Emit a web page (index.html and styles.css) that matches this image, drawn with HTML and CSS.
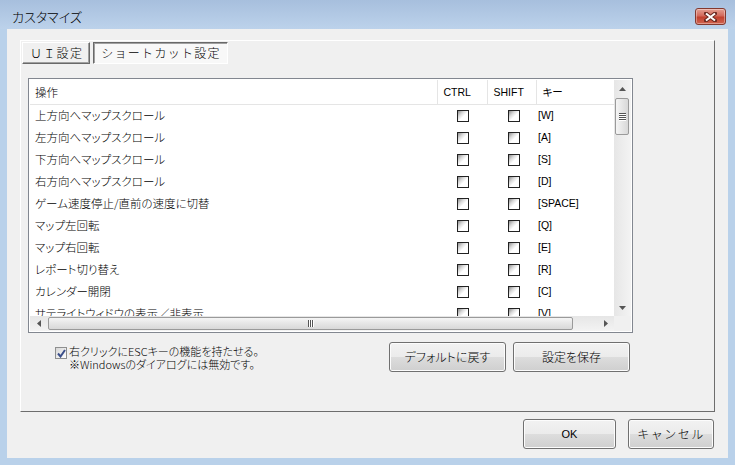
FILE: index.html
```html
<!DOCTYPE html>
<html lang="ja">
<head>
    <meta charset="utf-8">
    <title>カスタマイズ</title>
    <link rel="stylesheet" href="styles.css">
</head>
<body>

<div class="window">
    <div class="titlebar">
        <span class="title">カスタマイズ</span>
        <button class="close">
            <svg width="13" height="10" viewBox="0 0 13 10">
                <path d="M2 1.5 L11 8.5 M11 1.5 L2 8.5" stroke="#6b2a22" stroke-width="4" stroke-linecap="square"/>
                <path d="M2 1.5 L11 8.5 M11 1.5 L2 8.5" stroke="#fff" stroke-width="2"/>
            </svg>
        </button>
    </div>

    <div class="client">
        <div class="panel">
            <div class="tabs">
                <button class="tab">ＵＩ設定</button>
                <button class="tab valgt">ショートカット設定</button>
            </div>

            <div class="listbox">
                <div class="viewport">
                    <table class="keys">
                        <thead>
                            <tr><th class="c-name">操作</th><th>CTRL</th><th>SHIFT</th><th>キー</th></tr>
                        </thead>
                        <tbody>
                            <tr><td class="c-name">上方向へマップスクロール</td><td class="c-ctrl"><span class="box"></span></td><td class="c-shift"><span class="box"></span></td><td class="c-key">[W]</td></tr>
                            <tr><td class="c-name">左方向へマップスクロール</td><td class="c-ctrl"><span class="box"></span></td><td class="c-shift"><span class="box"></span></td><td class="c-key">[A]</td></tr>
                            <tr><td class="c-name">下方向へマップスクロール</td><td class="c-ctrl"><span class="box"></span></td><td class="c-shift"><span class="box"></span></td><td class="c-key">[S]</td></tr>
                            <tr><td class="c-name">右方向へマップスクロール</td><td class="c-ctrl"><span class="box"></span></td><td class="c-shift"><span class="box"></span></td><td class="c-key">[D]</td></tr>
                            <tr><td class="c-name">ゲーム速度停止/直前の速度に切替</td><td class="c-ctrl"><span class="box"></span></td><td class="c-shift"><span class="box"></span></td><td class="c-key">[SPACE]</td></tr>
                            <tr><td class="c-name">マップ左回転</td><td class="c-ctrl"><span class="box"></span></td><td class="c-shift"><span class="box"></span></td><td class="c-key">[Q]</td></tr>
                            <tr><td class="c-name">マップ右回転</td><td class="c-ctrl"><span class="box"></span></td><td class="c-shift"><span class="box"></span></td><td class="c-key">[E]</td></tr>
                            <tr><td class="c-name">レポート切り替え</td><td class="c-ctrl"><span class="box"></span></td><td class="c-shift"><span class="box"></span></td><td class="c-key">[R]</td></tr>
                            <tr><td class="c-name">カレンダー開閉</td><td class="c-ctrl"><span class="box"></span></td><td class="c-shift"><span class="box"></span></td><td class="c-key">[C]</td></tr>
                            <tr><td class="c-name">サテライトウィドウの表示／非表示</td><td class="c-ctrl"><span class="box"></span></td><td class="c-shift"><span class="box"></span></td><td class="c-key">[V]</td></tr>
                        </tbody>
                    </table>
                </div>

                <div class="vscroll">
                    <div class="sbtn"><svg width="7" height="4" viewBox="0 0 7 4"><path d="M0 4 L3.5 0 L7 4 Z" fill="#555"/></svg></div>
                    <div class="vtrack"><div class="vthumb"><span></span><span></span><span></span><span></span></div></div>
                    <div class="sbtn"><svg width="7" height="4" viewBox="0 0 7 4"><path d="M0 0 L3.5 4 L7 0 Z" fill="#555"/></svg></div>
                </div>

                <div class="hscroll">
                    <div class="sbtn"><svg width="4" height="7" viewBox="0 0 4 7"><path d="M4 0 L0 3.5 L4 7 Z" fill="#555"/></svg></div>
                    <div class="htrack"><div class="hthumb"><span></span><span></span><span></span></div></div>
                    <div class="sbtn"><svg width="4" height="7" viewBox="0 0 4 7"><path d="M0 0 L4 3.5 L0 7 Z" fill="#555"/></svg></div>
                </div>
                <div class="corner"></div>
            </div>

            <div class="options">
                <label class="esc-option">
                    <span class="check">
                        <svg width="9" height="9" viewBox="0 0 9 9"><path d="M1 4.5 L3.5 7.5 L8 1" fill="none" stroke="#3b4f8a" stroke-width="2"/></svg>
                    </span>
                    <span class="esc-text">右クリックにESCキーの機能を持たせる。<br>※Windowsのダイアログには無効です。</span>
                </label>
                <div class="actions">
                    <button class="btn">デフォルトに戻す</button>
                    <button class="btn">設定を保存</button>
                </div>
            </div>
        </div>

        <div class="footer">
            <button class="btn ok">OK</button>
            <button class="btn cancel">キャンセル</button>
        </div>
    </div>
</div>

</body>
</html>
```

FILE: styles.css
```css
* {
    box-sizing: border-box;
}

body {
    margin: 0;
    font-family: "Noto Sans CJK JP", sans-serif;
    font-size: 12px;
    font-weight: 300;
    font-feature-settings: "palt";
    color: #000;
}

button {
    font: inherit;
    color: inherit;
    margin: 0;
}

.window {
    width: 735px;
    height: 465px;
    display: flex;
    flex-direction: column;
    padding: 0 7px 7px;
    background: #b9d1ea;
}

.titlebar {
    height: 29px;
    margin: 0 -7px;
    padding: 0 9px 0 12px;
    display: flex;
    align-items: center;
    justify-content: space-between;
    background: linear-gradient(#a7bfdd, #bcd2eb);
}

.title {
    font-size: 13px;
    line-height: 16px;
    margin-top: 5px;
}

.close {
    width: 31px;
    height: 17px;
    margin-top: 4px;
    padding: 0;
    display: flex;
    align-items: center;
    justify-content: center;
    border: 1px solid #83392f;
    border-radius: 3px;
    background: linear-gradient(#e4a093, #d2695b 45%, #c1412f 55%, #d06450);
    box-shadow: inset 0 0 0 1px rgba(255, 255, 255, 0.35);
}

.client {
    flex: 1;
    display: flex;
    flex-direction: column;
    padding: 11px 13px 0;
    background: #f0f0f0;
}

.panel {
    flex: 1;
    padding: 1px 0 0 1px;
    border: 1px solid;
    border-color: #fff #6d6d6d #6d6d6d #fff;
}

.tabs {
    display: flex;
    gap: 3px;
    height: 22px;
}

.tab {
    height: 22px;
    padding: 0 6px 0 7px;
    font-size: 12px;
    letter-spacing: 1.3px;
    line-height: 18px;
    font-feature-settings: normal;
    background: #f0f0f0;
    border: 1px solid;
    border-color: #fff #696969 #696969 #fff;
    box-shadow: inset -1px -1px 0 #a0a0a0;
}

.tab.valgt {
    border-color: #696969 #fff #fff #696969;
    box-shadow: inset 1px 1px 0 #a0a0a0;
    background: #f8f8f8;
}

.listbox {
    width: 605px;
    height: 255px;
    margin: 14px 0 0 6px;
    border: 1px solid #828790;
    padding: 1px;
    background: #fff;
    display: grid;
    grid-template-columns: 584px 17px;
    grid-template-rows: 236px 15px;
}

.viewport {
    overflow: hidden;
    background: #fff;
}

.keys {
    border-collapse: collapse;
    table-layout: fixed;
    width: 584px;
}

.keys th {
    height: 24px;
    padding: 0 0 0 6px;
    text-align: left;
    font-weight: normal;
    font-family: "Liberation Sans", "Noto Sans CJK JP", sans-serif;
    font-size: 10.5px;
    border-bottom: 1px solid #e5e5e5;
    border-right: 1px solid #e5e5e5;
}

.keys th.c-name {
    width: 407px;
    padding-left: 5px;
    font-family: "Noto Sans CJK JP", sans-serif;
    font-size: 11.5px;
    font-weight: 300;
}

.keys th:nth-child(2) { width: 50px; }
.keys th:nth-child(3) { width: 49px; }
.keys th:nth-child(4) { width: 78px; border-right: none; }

.keys td {
    height: 22px;
    padding: 0;
    white-space: nowrap;
    line-height: 14px;
}

.keys td.c-name {
    padding-left: 5px;
    font-size: 11.5px;
}

.c-ctrl { padding-left: 20px !important; }
.c-shift { padding-left: 21px !important; }

.keys td.c-key {
    padding-left: 2px;
    font-family: "Liberation Sans", sans-serif;
    font-weight: normal;
    font-size: 10.5px;
}

.box {
    display: block;
    width: 12px;
    height: 12px;
    border: 1px solid #222;
    background: linear-gradient(135deg, #8c8c8c 0%, #d8d8d8 30%, #fff 55%);
    margin-top: 2px;
}

.sbtn {
    width: 17px;
    height: 17px;
    display: flex;
    align-items: center;
    justify-content: center;
    flex: none;
}

.vscroll {
    display: flex;
    flex-direction: column;
    background: linear-gradient(90deg, #e6e6e6, #f3f3f3);
}

.vtrack {
    flex: 1;
    padding: 1px 2px 0 1px;
}

.vthumb {
    height: 37px;
    border: 1px solid #9a9a9a;
    border-radius: 2px;
    background: linear-gradient(90deg, #f5f5f5, #e6e6e6 50%, #d8d8d8);
    display: flex;
    flex-direction: column;
    align-items: center;
    justify-content: center;
    gap: 1px;
}

.vthumb span {
    width: 7px;
    height: 1px;
    background: #555;
    box-shadow: 0 1px 0 #fff;
}

.hscroll {
    display: flex;
    height: 15px;
    background: linear-gradient(#e6e6e6, #f3f3f3);
}

.hscroll .sbtn {
    height: 15px;
}

.htrack {
    flex: 1;
    padding: 1px 0 1px 1px;
}

.hthumb {
    width: 525px;
    height: 100%;
    border: 1px solid #9a9a9a;
    border-radius: 2px;
    background: linear-gradient(#f5f5f5, #e6e6e6 50%, #d8d8d8);
    display: flex;
    align-items: center;
    justify-content: center;
    gap: 1px;
}

.hthumb span {
    width: 1px;
    height: 7px;
    background: #555;
    box-shadow: 1px 0 0 #fff;
}

.corner {
    background: #f0f0f0;
}

.options {
    width: 605px;
    margin: 9px 0 0 6px;
    padding: 0 3px 0 27px;
    display: flex;
    align-items: flex-start;
}

.esc-option {
    display: flex;
    align-items: flex-start;
    gap: 2px;
    margin-top: 3px;
}

.check {
    width: 12px;
    height: 12px;
    margin-top: 2px;
    border: 1px solid #8e8f8f;
    background: linear-gradient(135deg, #d6d6d6, #fff);
    display: flex;
    align-items: center;
    justify-content: center;
}

.esc-text {
    font-size: 11px;
    line-height: 13px;
}

.actions {
    margin-left: auto;
    display: flex;
    gap: 7px;
}

.btn {
    width: 117px;
    height: 30px;
    padding: 0;
    border: 1px solid #707070;
    border-radius: 3px;
    background: linear-gradient(#f2f2f2 0%, #ebebeb 50%, #dddddd 50%, #cfcfcf 100%);
    box-shadow: inset 0 0 0 1px #fcfcfc;
    font-size: 12px;
    line-height: 16px;
}

.footer {
    display: flex;
    justify-content: flex-end;
    gap: 12px;
    padding: 7px 1px 9px 0;
}

.ok {
    width: 93px;
    font-family: "Liberation Sans", sans-serif;
    font-weight: normal;
    font-size: 11px;
}

.cancel {
    width: 86px;
    font-size: 12px;
    letter-spacing: 1.5px;
    font-feature-settings: normal;
}
```
